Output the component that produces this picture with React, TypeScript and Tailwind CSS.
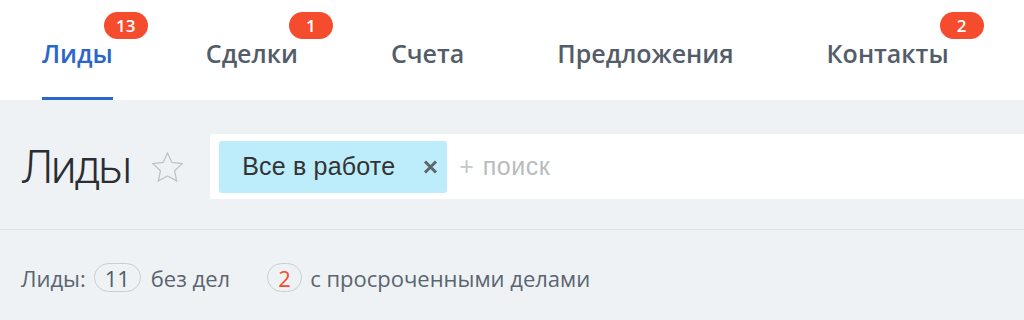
import React from "react";

const tabs = [
  { label: "Лиды", badge: "13", active: true },
  { label: "Сделки", badge: "1" },
  { label: "Счета" },
  { label: "Предложения" },
  { label: "Контакты", badge: "2" },
];

export default function App() {
  return (
    <div className="w-[1024px] h-[320px] overflow-hidden bg-[#eef2f4]" style={{ fontFamily: '"Open Sans", sans-serif' }}>
      <div className="h-[100px] bg-white flex pl-[42px] gap-[93px]">
        {tabs.map((t) => (
          <div
            key={t.label}
            className={
              "relative h-full flex items-center pt-[10px] " +
              (t.active ? "border-b-[3px] border-[#2b67c9]" : "border-b-[3px] border-transparent")
            }
          >
            <span
              className={
                "text-[25px] font-semibold leading-none " +
                (t.active ? "text-[#2b67c9]" : "text-[#535c69]")
              }
            >
              {t.label}
            </span>
            {t.badge && (
              <span className="absolute top-[12px] left-[calc(100%-9px)] h-[27px] min-w-[44px] px-2 rounded-full bg-[#f44c2c] text-white text-[17px] font-semibold flex items-center justify-center leading-none">
                {t.badge}
              </span>
            )}
          </div>
        ))}
      </div>

      <div className="pt-[34px] pb-[30px] border-b border-[#dfe3e6]">
        <div className="flex items-center pl-[21px]">
          <span
            className="text-[46px] font-light text-[#2a2e33] leading-none tracking-[-2.5px] mr-[22px]"
            style={{ fontFamily: 'Roboto, sans-serif' }}
          >
            Лиды
          </span>
          <svg width="31" height="30" viewBox="2 2 20 19.2" className="mr-[27px]">
            <path
              d="M12 2.6l2.85 6.1 6.65.75-4.95 4.55 1.35 6.6L12 17.35 6.1 20.6l1.35-6.6L2.5 9.45l6.65-.75z"
              fill="none"
              stroke="#bfc3c7"
              strokeWidth="0.85"
              strokeLinejoin="miter"
            />
          </svg>
          <div className="flex-1 h-[65px] bg-white rounded-l-[3px] flex items-center pl-[9px]">
            <div
              className="h-[52px] w-[228px] bg-[#bdedfb] rounded-[3px] flex items-center pl-[23px] pr-[9px]"
              style={{ fontFamily: '"Liberation Sans", sans-serif' }}
            >
              <span className="text-[25px] text-[#333] leading-none tracking-[0.2px]">Все в работе</span>
              <svg width="15" height="14" viewBox="0 0 15 14" className="ml-auto">
                <path d="M2 1.5l11 11M13 1.5l-11 11" stroke="#5f656b" strokeWidth="3" />
              </svg>
            </div>
            <span
              className="ml-[12px] text-[25px] text-[#b8bcc0] leading-none"
              style={{ fontFamily: '"Liberation Sans", sans-serif' }}
            >
              <span className="font-light text-[#c4c8cb]">+</span>
              <span className="ml-[9px] tracking-[0.5px]">поиск</span>
            </span>
          </div>
        </div>
      </div>

      <div className="flex items-center pl-[21px] pt-[33px] text-[22px] text-[#5a6570] leading-none">
        <span>Лиды:</span>
        <span className="ml-[8px] h-[29px] w-[47px] rounded-full border border-[#c9ced2] flex items-center justify-center text-[#535c69]">11</span>
        <span className="ml-[10px]">без дел</span>
        <span className="ml-[37px] h-[29px] w-[35px] rounded-full border border-[#c9ced2] flex items-center justify-center text-[#f44c2c]">2</span>
        <span className="ml-[8px]">с просроченными делами</span>
      </div>
    </div>
  );
}
